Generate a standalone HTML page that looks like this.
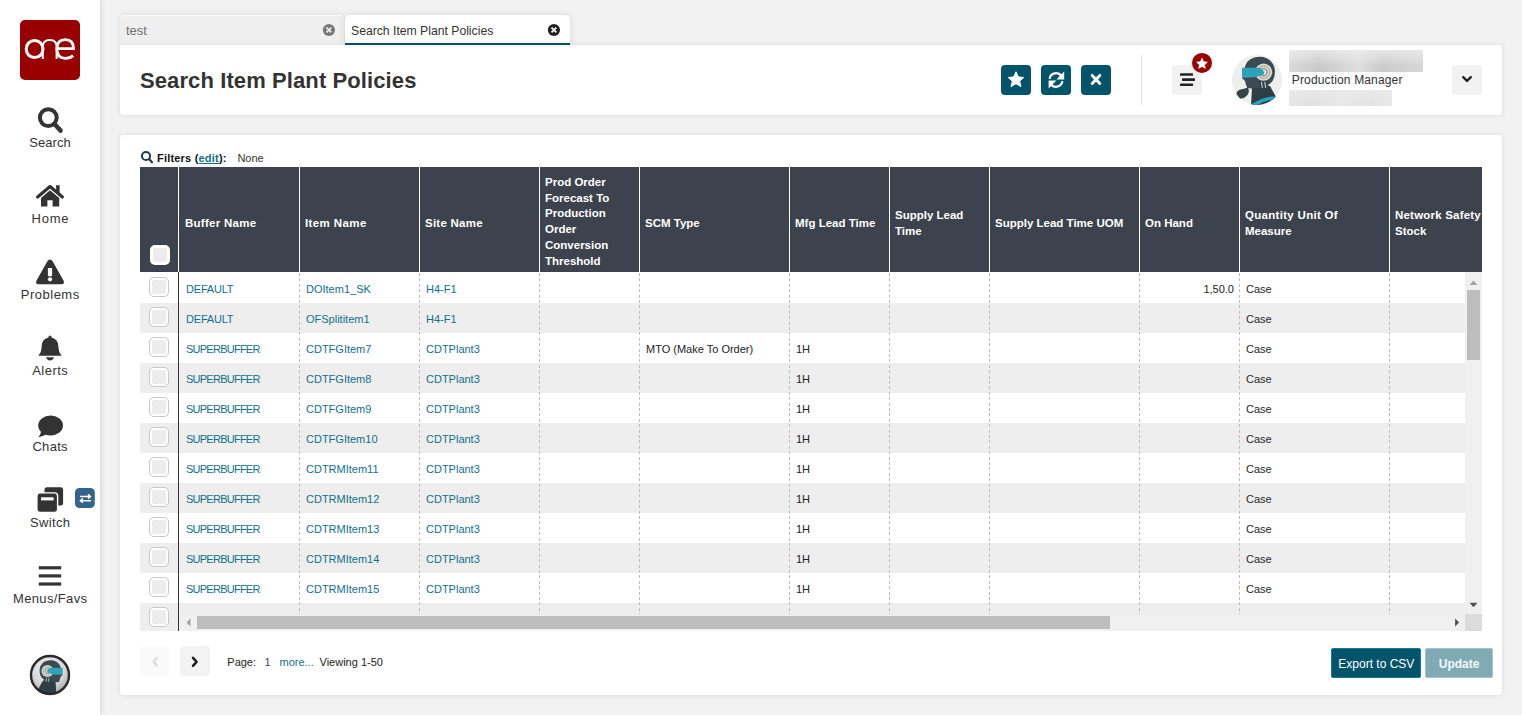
<!DOCTYPE html>
<html><head><meta charset="utf-8"><title>Search Item Plant Policies</title>
<style>
*{box-sizing:border-box;margin:0;padding:0}
html,body{width:1522px;height:715px;overflow:hidden;background:#f2f2f2;font-family:"Liberation Sans",sans-serif;}
.a{position:absolute}
.t{position:absolute;white-space:nowrap;line-height:20px;height:20px}
svg{position:absolute;overflow:visible}
</style></head><body>

<div class="a" style="left:0;top:0;width:100px;height:715px;background:#fff;box-shadow:1px 0 5px rgba(40,15,15,0.13)"></div>
<div class="a" style="left:20px;top:20px;width:60px;height:60px;background:#990000;border-radius:5px"></div>
<svg class="a" style="left:0;top:0" width="100" height="100" viewBox="0 0 100 100">
<g fill="none" stroke="#fff">
<ellipse cx="34.6" cy="49" rx="8.4" ry="8.6" stroke-width="3"/>
<path d="M42.8,59 V46.5 Q42.8,39.9 49.8,39.9 Q56.6,39.9 56.6,46.5 V59" stroke-width="2"/>
<path d="M57,48.6 H73.5 Q73.5,39.7 65.2,39.7 Q56.9,39.7 56.9,49 Q56.9,58.3 65.4,58.3 Q70.2,58.3 73.2,55.6" stroke-width="2.8"/>
</g></svg>
<svg class="a" style="left:0;top:0" width="100" height="715">
<circle cx="48.3" cy="117.6" r="8.4" fill="none" stroke="#333" stroke-width="4"/>
<path d="M54.5,124 L60.5,130.5" stroke="#333" stroke-width="4.6" stroke-linecap="round"/>
<!-- home -->
<path d="M37.6,197 L50,186.6 L62.4,197" fill="none" stroke="#333" stroke-width="3.2" stroke-linecap="round" stroke-linejoin="round"/>
<rect x="56.1" y="185.2" width="3.5" height="8" fill="#333"/>
<path d="M41,198 L50,190.3 L59.2,198 V206.6 H52.6 V200.2 H47.4 V206.6 H41 Z" fill="#333"/>
<!-- warning -->
<path d="M50,259.4 Q51.6,259.4 52.6,261.2 L63.6,280.8 Q64.9,284.2 61.6,284.2 H38.4 Q35.1,284.2 36.4,280.8 L47.4,261.2 Q48.4,259.4 50,259.4 Z" fill="#333"/>
<rect x="47.9" y="268" width="4.2" height="8.2" rx="0.6" fill="#fff"/>
<circle cx="50" cy="279.3" r="2.1" fill="#fff"/>
<!-- bell -->
<path d="M50,335.6 Q51.5,335.6 51.6,337.5 Q58.2,339 58.4,346.5 Q58.6,352.5 61.3,355 V355.8 H38.7 V355 Q41.4,352.5 41.6,346.5 Q41.8,339 48.4,337.5 Q48.5,335.6 50,335.6 Z" fill="#333"/>
<path d="M46,357.3 H54 Q53.2,360.4 50,360.4 Q46.8,360.4 46,357.3 Z" fill="#333"/>
<!-- chat -->
<ellipse cx="50.6" cy="425.5" rx="12.4" ry="10" fill="#333"/>
<path d="M40.8,430.5 Q41.5,433.5 38.2,437.3 Q43.5,436.5 46.5,434.3 Z" fill="#333"/>
<!-- switch -->
<rect x="44.5" y="487.3" width="18.6" height="18.2" rx="2.5" fill="#333"/>
<rect x="36.9" y="492.9" width="20.7" height="19.6" rx="3" fill="#333" stroke="#fff" stroke-width="1.4"/>
<rect x="41" y="497.3" width="12.6" height="3.1" fill="#fff"/>
<rect x="75" y="488" width="19.8" height="20" rx="4.5" fill="#33628b"/>
<path d="M80,496.5 H90.2 M88,494.4 L90.4,496.5 L88,498.6 M91,500.7 H80.6 M82.8,498.6 L80.4,500.7 L82.8,502.8" fill="none" stroke="#fff" stroke-width="1.5"/>
<!-- menus -->
<rect x="38.8" y="566.2" width="22.4" height="3.2" fill="#333"/>
<rect x="38.8" y="574.3" width="22.4" height="3.2" fill="#333"/>
<rect x="38.8" y="582.4" width="22.4" height="3.2" fill="#333"/>
</svg>
<div class="t" style="left:-49.95px;width:200px;text-align:center;top:132.50px;font-size:13px;font-weight:400;color:#333;letter-spacing:0.1px;">Search</div>
<div class="t" style="left:-49.65px;width:200px;text-align:center;top:208.50px;font-size:13px;font-weight:400;color:#333;letter-spacing:0.7px;">Home</div>
<div class="t" style="left:-49.75px;width:200px;text-align:center;top:284.50px;font-size:13px;font-weight:400;color:#333;letter-spacing:0.5px;">Problems</div>
<div class="t" style="left:-49.75px;width:200px;text-align:center;top:360.50px;font-size:13px;font-weight:400;color:#333;letter-spacing:0.5px;">Alerts</div>
<div class="t" style="left:-49.85px;width:200px;text-align:center;top:436.50px;font-size:13px;font-weight:400;color:#333;letter-spacing:0.3px;">Chats</div>
<div class="t" style="left:-49.825px;width:200px;text-align:center;top:512.50px;font-size:13px;font-weight:400;color:#333;letter-spacing:0.35px;">Switch</div>
<div class="t" style="left:-49.825px;width:200px;text-align:center;top:588.50px;font-size:13px;font-weight:400;color:#333;letter-spacing:0.35px;">Menus/Favs</div>
<svg class="a" style="left:0;top:0" width="1522" height="715">
<defs><clipPath id="cp1"><circle cx="50" cy="675" r="20"/></clipPath>
<radialGradient id="rg1" cx="0.45" cy="0.35" r="0.7"><stop offset="0" stop-color="#f4f4f4"/><stop offset="0.6" stop-color="#d6d6d6"/><stop offset="1" stop-color="#9a9a9a"/></radialGradient></defs>
<circle cx="50" cy="675" r="20" fill="url(#rg1)"/>
<g clip-path="url(#cp1)"><g transform="translate(52.1,676.4) scale(-0.7,0.7)">
<path d="M-6,26 L-5,8 Q4,6 13,6 L18.5,16 L20,26 Z" fill="#2f3d44"/>

<path d="M-12.8,-8 Q-13,-20 -2,-22.8 Q12,-25 17,-14 Q19.5,-6 15.5,1 Q13,4 11,5 L11,8 L2,8 Q-3,9 -6,8.5 L-9.8,8 Q-11.5,4 -12,1 L-15,-2 Q-13,-4 -12.8,-8 Z" fill="#3c4b52"/>
<path d="M2,1.5 L11,1.5 L11.5,8 L1.5,8.5 Z" fill="#34434a"/>
<path d="M4.5,2 L5.3,7.8 M7.8,2 L8.6,7.8" stroke="#c9d3d6" stroke-width="1.1"/>
<circle cx="6.6" cy="-7.8" r="8.6" fill="#d6dbdb"/>
<circle cx="6.6" cy="-7.8" r="6.3" fill="none" stroke="#b59f62" stroke-width="1"/>
<circle cx="6.6" cy="-7.8" r="3.6" fill="none" stroke="#8c9599" stroke-width="1.4"/>
<path d="M-15,-12.3 L3,-12.3 Q8,-9 7,-6 Q3,-2.5 -15,-2.2 Z" fill="#2ea2b9"/>

</g></g><circle cx="50" cy="675" r="19" fill="none" stroke="#2a2a2a" stroke-width="2.4"/></svg>
<div class="a" style="left:120px;top:15px;width:224px;height:30px;border-radius:5px 5px 0 0;box-shadow:0 0 6px rgba(40,15,15,0.10)"></div>
<div class="a" style="left:345px;top:15px;width:225px;height:30px;border-radius:5px 5px 0 0;box-shadow:0 0 7px rgba(40,15,15,0.12)"></div>
<div class="a" style="left:120px;top:45px;width:1382px;height:70px;background:#fff;border-radius:0 4px 4px 4px;box-shadow:0 0 6px rgba(40,15,15,0.10)"></div>
<div class="a" style="left:120px;top:15px;width:224px;height:30px;background:#efefef;border-radius:5px 5px 0 0;box-shadow:inset 0 1px 0 #fafafa, inset -3px -2px 4px rgba(0,0,0,0.04)"></div>
<div class="a" style="left:345px;top:15px;width:225px;height:30px;background:#fff;border-radius:5px 5px 0 0;border-bottom:2px solid #02546b"></div>
<div class="t" style="left:126px;top:20.50px;font-size:13px;font-weight:400;color:#707070;letter-spacing:0px;">test</div>
<div class="t" style="left:351px;top:20.77px;font-size:12.2px;font-weight:400;color:#333;letter-spacing:0px;">Search Item Plant Policies</div>
<svg class="a" style="left:0;top:0" width="600" height="60">
<circle cx="328.9" cy="30" r="6.1" fill="#777"/>
<path d="M326.5,27.6 L331.3,32.4 M331.3,27.6 L326.5,32.4" stroke="#efefef" stroke-width="1.7"/>
<circle cx="553.9" cy="30" r="6.1" fill="#222"/>
<path d="M551.5,27.6 L556.3,32.4 M556.3,27.6 L551.5,32.4" stroke="#fff" stroke-width="1.7"/>
</svg>
<div class="t" style="left:140px;top:70.98px;font-size:22px;font-weight:700;color:#333;letter-spacing:0.1px;">Search Item Plant Policies</div>
<div class="a" style="left:1001px;top:65px;width:30px;height:30px;background:#02546b;border-radius:4px"></div>
<div class="a" style="left:1041px;top:65px;width:30px;height:30px;background:#02546b;border-radius:4px"></div>
<div class="a" style="left:1081px;top:65px;width:30px;height:30px;background:#02546b;border-radius:4px"></div>
<svg class="a" style="left:0;top:0" width="1522" height="130">
<path d="M1016,71.8 L1018.3,76.9 L1023.8,77.5 L1019.7,81.1 L1020.9,86.5 L1016,83.7 L1011.1,86.5 L1012.3,81.1 L1008.2,77.5 L1013.7,76.9 Z" fill="#fff" stroke="#fff" stroke-width="1" stroke-linejoin="round"/>
<path d="M1049.6,78.8 A6.5,6.5 0 0 1 1061.6,76.4" fill="none" stroke="#fff" stroke-width="2.2"/>
<path d="M1064.2,71.6 V79.4 H1056.4 Z" fill="#fff"/>
<path d="M1062.4,81.2 A6.5,6.5 0 0 1 1050.4,83.6" fill="none" stroke="#fff" stroke-width="2.2"/>
<path d="M1048.6,88.4 V80.6 H1056.4 Z" fill="#fff"/>
<path d="M1092.2,75.4 L1099.8,83.4 M1099.8,75.4 L1092.2,83.4" stroke="#fff" stroke-width="2.9" stroke-linecap="round"/>
<rect x="1141" y="55" width="1" height="50" fill="#e3e3e3"/>
</svg>
<div class="a" style="left:1172px;top:65px;width:30px;height:30px;background:#f2f2f2;border-radius:4px"></div>
<svg class="a" style="left:0;top:0" width="1522" height="130">
<rect x="1180" y="73.2" width="13" height="2.6" rx="0.6" fill="#222"/>
<rect x="1182" y="78.3" width="13" height="2.6" rx="0.6" fill="#222"/>
<rect x="1180" y="83.4" width="13" height="2.6" rx="0.6" fill="#222"/>
<circle cx="1202" cy="62.9" r="10" fill="#990000"/>
<g transform="translate(0,1.2)"><path d="M1202,57.2 L1203.6,60.6 L1207.3,61 L1204.5,63.5 L1205.3,67.1 L1202,65.2 L1198.7,67.1 L1199.5,63.5 L1196.7,61 L1200.4,60.6 Z" fill="#fff" stroke="#fff" stroke-width="0.8" stroke-linejoin="round"/></g>
</svg>
<svg class="a" style="left:0;top:0" width="1522" height="715">
<defs><clipPath id="cp2"><circle cx="1257" cy="80" r="25"/></clipPath>
<radialGradient id="rg2" cx="0.45" cy="0.35" r="0.7"><stop offset="0" stop-color="#f4f4f4"/><stop offset="0.6" stop-color="#d6d6d6"/><stop offset="1" stop-color="#9a9a9a"/></radialGradient></defs>
<circle cx="1257" cy="80" r="25" fill="#efefef"/>
<g clip-path="url(#cp2)"><g transform="translate(1257,80) scale(1.0,1.0)">
<path d="M-6,26 L-5,8 Q4,6 13,6 L18.5,16 L20,26 Z" fill="#2f3d44"/>
<path d="M-6,24.5 Q4,17.5 17,16.2 L18.5,19.3 Q6,20.3 -3,27 Z" fill="#23a3c3"/>
<path d="M-12.8,-8 Q-13,-20 -2,-22.8 Q12,-25 17,-14 Q19.5,-6 15.5,1 Q13,4 11,5 L11,8 L2,8 Q-3,9 -6,8.5 L-9.8,8 Q-11.5,4 -12,1 L-15,-2 Q-13,-4 -12.8,-8 Z" fill="#3c4b52"/>
<path d="M2,1.5 L11,1.5 L11.5,8 L1.5,8.5 Z" fill="#34434a"/>
<path d="M4.5,2 L5.3,7.8 M7.8,2 L8.6,7.8" stroke="#c9d3d6" stroke-width="1.1"/>
<circle cx="6.6" cy="-7.8" r="8.6" fill="#d6dbdb"/>
<circle cx="6.6" cy="-7.8" r="6.3" fill="none" stroke="#b59f62" stroke-width="1"/>
<circle cx="6.6" cy="-7.8" r="3.6" fill="none" stroke="#8c9599" stroke-width="1.4"/>
<path d="M-15,-12.3 L3,-12.3 Q8,-9 7,-6 Q3,-2.5 -15,-2.2 Z" fill="#2ea2b9"/>
<path d="M-9,7.5 Q-7,12 -10,15.5 Q-13,19 -17,18.7 Q-21,17.5 -20.5,13 Q-19.5,9.5 -14,9 Z" fill="#33434a"/>
</g></g></svg>
<div class="a" style="left:1289px;top:50px;width:134px;height:22px;background:linear-gradient(180deg,rgba(240,240,240,0.75),rgba(240,240,240,0.1) 75%),linear-gradient(90deg,#d8d8d8,#c4c4c4 22%,#d6d6d6 45%,#dcdcdc 52%,#c6c6c6 70%,#d0d0d0 90%,#d4d4d4)"></div>
<div class="t" style="left:1291.8px;top:69.84px;font-size:12px;font-weight:400;color:#333;letter-spacing:0.15px;">Production Manager</div>
<div class="a" style="left:1289px;top:90px;width:103px;height:16px;background:linear-gradient(180deg,rgba(236,236,236,0.6),rgba(236,236,236,0) 80%),linear-gradient(90deg,#e6e6e6,#e1e1e1 20%,#e8e8e8 50%,#e3e3e3 80%,#e9e9e9)"></div>
<div class="a" style="left:1452px;top:65px;width:30px;height:30px;background:#f2f2f2;border-radius:4px"></div>
<svg class="a" style="left:0;top:0" width="1522" height="130"><path d="M1463.2,77.2 L1467,80.9 L1470.8,77.2" fill="none" stroke="#222" stroke-width="2.4" stroke-linecap="round" stroke-linejoin="round"/></svg>
<div class="a" style="left:120px;top:135px;width:1382px;height:560px;background:#fff;border-radius:4px;box-shadow:0 0 6px rgba(40,15,15,0.10)"></div>
<svg class="a" style="left:0;top:0" width="300" height="200">
<circle cx="146" cy="156" r="4.1" fill="none" stroke="#233a4a" stroke-width="2"/>
<path d="M149,159 L152,162.2" stroke="#233a4a" stroke-width="2.3" stroke-linecap="round"/>
</svg>
<div class="t" style="left:157px;top:148.19px;font-size:11px;font-weight:700;color:#111;letter-spacing:0.2px">Filters (<span style="color:#12708c;text-decoration:underline">edit</span>):</div>
<div class="t" style="left:237.4px;top:148.19px;font-size:11px;font-weight:400;color:#333;letter-spacing:0px;">None</div>
<div class="a" style="left:140px;top:167px;width:1342px;height:464px;overflow:hidden">
<div class="a" style="left:0;top:0;width:1342px;height:105px;background:#3d434c"></div>
<div class="t" style="left:45px;top:46.12px;font-size:11.5px;font-weight:700;color:#fff;letter-spacing:0.27px">Buffer Name</div>
<div class="a" style="left:159px;top:0;width:1px;height:105px;background:#fff"></div>
<div class="t" style="left:165px;top:46.12px;font-size:11.5px;font-weight:700;color:#fff;letter-spacing:0.4px">Item Name</div>
<div class="a" style="left:279px;top:0;width:1px;height:105px;background:#fff"></div>
<div class="t" style="left:285px;top:46.12px;font-size:11.5px;font-weight:700;color:#fff;letter-spacing:0.25px">Site Name</div>
<div class="a" style="left:399px;top:0;width:1px;height:105px;background:#fff"></div>
<div class="t" style="left:405px;top:4.72px;font-size:11.5px;font-weight:700;color:#fff;letter-spacing:0px">Prod Order</div>
<div class="t" style="left:405px;top:20.54px;font-size:11.5px;font-weight:700;color:#fff;letter-spacing:0px">Forecast To</div>
<div class="t" style="left:405px;top:36.36px;font-size:11.5px;font-weight:700;color:#fff;letter-spacing:0px">Production</div>
<div class="t" style="left:405px;top:52.18px;font-size:11.5px;font-weight:700;color:#fff;letter-spacing:0px">Order</div>
<div class="t" style="left:405px;top:68.00px;font-size:11.5px;font-weight:700;color:#fff;letter-spacing:0px">Conversion</div>
<div class="t" style="left:405px;top:83.82px;font-size:11.5px;font-weight:700;color:#fff;letter-spacing:0px">Threshold</div>
<div class="a" style="left:499px;top:0;width:1px;height:105px;background:#fff"></div>
<div class="t" style="left:505px;top:46.12px;font-size:11.5px;font-weight:700;color:#fff;letter-spacing:0px">SCM Type</div>
<div class="a" style="left:649px;top:0;width:1px;height:105px;background:#fff"></div>
<div class="t" style="left:655px;top:46.12px;font-size:11.5px;font-weight:700;color:#fff;letter-spacing:0px">Mfg Lead Time</div>
<div class="a" style="left:749px;top:0;width:1px;height:105px;background:#fff"></div>
<div class="t" style="left:755px;top:38.22px;font-size:11.5px;font-weight:700;color:#fff;letter-spacing:0px">Supply Lead</div>
<div class="t" style="left:755px;top:54.02px;font-size:11.5px;font-weight:700;color:#fff;letter-spacing:0px">Time</div>
<div class="a" style="left:849px;top:0;width:1px;height:105px;background:#fff"></div>
<div class="t" style="left:855px;top:46.12px;font-size:11.5px;font-weight:700;color:#fff;letter-spacing:0px">Supply Lead Time UOM</div>
<div class="a" style="left:999px;top:0;width:1px;height:105px;background:#fff"></div>
<div class="t" style="left:1005px;top:46.12px;font-size:11.5px;font-weight:700;color:#fff;letter-spacing:0px">On Hand</div>
<div class="a" style="left:1099px;top:0;width:1px;height:105px;background:#fff"></div>
<div class="t" style="left:1105px;top:38.22px;font-size:11.5px;font-weight:700;color:#fff;letter-spacing:0.3px">Quantity Unit Of</div>
<div class="t" style="left:1105px;top:54.02px;font-size:11.5px;font-weight:700;color:#fff;letter-spacing:0px">Measure</div>
<div class="a" style="left:1249px;top:0;width:1px;height:105px;background:#fff"></div>
<div class="t" style="left:1255px;top:38.22px;font-size:11.5px;font-weight:700;color:#fff;letter-spacing:0.2px">Network Safety</div>
<div class="t" style="left:1255px;top:54.02px;font-size:11.5px;font-weight:700;color:#fff;letter-spacing:0px">Stock</div>
<div class="a" style="left:10px;top:78px;width:20px;height:20px;border:3px solid #fff;background:#ececec;border-radius:5px"></div>
<div class="a" style="left:0;top:105px;width:1325px;height:31px;background:#fff"></div>
<div class="a" style="left:9px;top:110px;width:20px;height:20px;border:1px solid #c8c8c8;background:#ececec;border-radius:5px;box-shadow:inset 0 0 0 2px #fff"></div>
<div class="t" style="left:46px;top:111.89px;font-size:11px;color:#12708c;letter-spacing:-0.2px">DEFAULT</div>
<div class="t" style="left:166px;top:111.89px;font-size:11px;color:#12708c;letter-spacing:0px">DOItem1_SK</div>
<div class="t" style="left:286px;top:111.89px;font-size:11px;color:#12708c;letter-spacing:0px">H4-F1</div>
<div class="t" style="left:999px;width:95px;text-align:right;top:111.89px;font-size:11px;color:#222">1,50.0</div>
<div class="t" style="left:1106px;top:111.89px;font-size:11px;color:#2a2a2a;letter-spacing:0px">Case</div>
<div class="a" style="left:0;top:136px;width:1325px;height:30px;background:#eeeeee"></div>
<div class="a" style="left:9px;top:140px;width:20px;height:20px;border:1px solid #c8c8c8;background:#ececec;border-radius:5px;box-shadow:inset 0 0 0 2px #fff"></div>
<div class="t" style="left:46px;top:141.89px;font-size:11px;color:#12708c;letter-spacing:-0.2px">DEFAULT</div>
<div class="t" style="left:166px;top:141.89px;font-size:11px;color:#12708c;letter-spacing:0px">OFSplititem1</div>
<div class="t" style="left:286px;top:141.89px;font-size:11px;color:#12708c;letter-spacing:0px">H4-F1</div>
<div class="t" style="left:1106px;top:141.89px;font-size:11px;color:#2a2a2a;letter-spacing:0px">Case</div>
<div class="a" style="left:0;top:166px;width:1325px;height:30px;background:#fff"></div>
<div class="a" style="left:9px;top:170px;width:20px;height:20px;border:1px solid #c8c8c8;background:#ececec;border-radius:5px;box-shadow:inset 0 0 0 2px #fff"></div>
<div class="t" style="left:46px;top:171.89px;font-size:11px;color:#12708c;letter-spacing:-0.75px">SUPERBUFFER</div>
<div class="t" style="left:166px;top:171.89px;font-size:11px;color:#12708c;letter-spacing:0px">CDTFGItem7</div>
<div class="t" style="left:286px;top:171.89px;font-size:11px;color:#12708c;letter-spacing:0px">CDTPlant3</div>
<div class="t" style="left:506px;top:171.89px;font-size:11px;color:#222;letter-spacing:0px">MTO (Make To Order)</div>
<div class="t" style="left:656px;top:171.89px;font-size:11px;color:#222;letter-spacing:0px">1H</div>
<div class="t" style="left:1106px;top:171.89px;font-size:11px;color:#2a2a2a;letter-spacing:0px">Case</div>
<div class="a" style="left:0;top:196px;width:1325px;height:30px;background:#eeeeee"></div>
<div class="a" style="left:9px;top:200px;width:20px;height:20px;border:1px solid #c8c8c8;background:#ececec;border-radius:5px;box-shadow:inset 0 0 0 2px #fff"></div>
<div class="t" style="left:46px;top:201.89px;font-size:11px;color:#12708c;letter-spacing:-0.75px">SUPERBUFFER</div>
<div class="t" style="left:166px;top:201.89px;font-size:11px;color:#12708c;letter-spacing:0px">CDTFGItem8</div>
<div class="t" style="left:286px;top:201.89px;font-size:11px;color:#12708c;letter-spacing:0px">CDTPlant3</div>
<div class="t" style="left:656px;top:201.89px;font-size:11px;color:#222;letter-spacing:0px">1H</div>
<div class="t" style="left:1106px;top:201.89px;font-size:11px;color:#2a2a2a;letter-spacing:0px">Case</div>
<div class="a" style="left:0;top:226px;width:1325px;height:30px;background:#fff"></div>
<div class="a" style="left:9px;top:230px;width:20px;height:20px;border:1px solid #c8c8c8;background:#ececec;border-radius:5px;box-shadow:inset 0 0 0 2px #fff"></div>
<div class="t" style="left:46px;top:231.89px;font-size:11px;color:#12708c;letter-spacing:-0.75px">SUPERBUFFER</div>
<div class="t" style="left:166px;top:231.89px;font-size:11px;color:#12708c;letter-spacing:0px">CDTFGItem9</div>
<div class="t" style="left:286px;top:231.89px;font-size:11px;color:#12708c;letter-spacing:0px">CDTPlant3</div>
<div class="t" style="left:656px;top:231.89px;font-size:11px;color:#222;letter-spacing:0px">1H</div>
<div class="t" style="left:1106px;top:231.89px;font-size:11px;color:#2a2a2a;letter-spacing:0px">Case</div>
<div class="a" style="left:0;top:256px;width:1325px;height:30px;background:#eeeeee"></div>
<div class="a" style="left:9px;top:260px;width:20px;height:20px;border:1px solid #c8c8c8;background:#ececec;border-radius:5px;box-shadow:inset 0 0 0 2px #fff"></div>
<div class="t" style="left:46px;top:261.89px;font-size:11px;color:#12708c;letter-spacing:-0.75px">SUPERBUFFER</div>
<div class="t" style="left:166px;top:261.89px;font-size:11px;color:#12708c;letter-spacing:0px">CDTFGItem10</div>
<div class="t" style="left:286px;top:261.89px;font-size:11px;color:#12708c;letter-spacing:0px">CDTPlant3</div>
<div class="t" style="left:656px;top:261.89px;font-size:11px;color:#222;letter-spacing:0px">1H</div>
<div class="t" style="left:1106px;top:261.89px;font-size:11px;color:#2a2a2a;letter-spacing:0px">Case</div>
<div class="a" style="left:0;top:286px;width:1325px;height:30px;background:#fff"></div>
<div class="a" style="left:9px;top:290px;width:20px;height:20px;border:1px solid #c8c8c8;background:#ececec;border-radius:5px;box-shadow:inset 0 0 0 2px #fff"></div>
<div class="t" style="left:46px;top:291.89px;font-size:11px;color:#12708c;letter-spacing:-0.75px">SUPERBUFFER</div>
<div class="t" style="left:166px;top:291.89px;font-size:11px;color:#12708c;letter-spacing:0px">CDTRMItem11</div>
<div class="t" style="left:286px;top:291.89px;font-size:11px;color:#12708c;letter-spacing:0px">CDTPlant3</div>
<div class="t" style="left:656px;top:291.89px;font-size:11px;color:#222;letter-spacing:0px">1H</div>
<div class="t" style="left:1106px;top:291.89px;font-size:11px;color:#2a2a2a;letter-spacing:0px">Case</div>
<div class="a" style="left:0;top:316px;width:1325px;height:30px;background:#eeeeee"></div>
<div class="a" style="left:9px;top:320px;width:20px;height:20px;border:1px solid #c8c8c8;background:#ececec;border-radius:5px;box-shadow:inset 0 0 0 2px #fff"></div>
<div class="t" style="left:46px;top:321.89px;font-size:11px;color:#12708c;letter-spacing:-0.75px">SUPERBUFFER</div>
<div class="t" style="left:166px;top:321.89px;font-size:11px;color:#12708c;letter-spacing:0px">CDTRMItem12</div>
<div class="t" style="left:286px;top:321.89px;font-size:11px;color:#12708c;letter-spacing:0px">CDTPlant3</div>
<div class="t" style="left:656px;top:321.89px;font-size:11px;color:#222;letter-spacing:0px">1H</div>
<div class="t" style="left:1106px;top:321.89px;font-size:11px;color:#2a2a2a;letter-spacing:0px">Case</div>
<div class="a" style="left:0;top:346px;width:1325px;height:30px;background:#fff"></div>
<div class="a" style="left:9px;top:350px;width:20px;height:20px;border:1px solid #c8c8c8;background:#ececec;border-radius:5px;box-shadow:inset 0 0 0 2px #fff"></div>
<div class="t" style="left:46px;top:351.89px;font-size:11px;color:#12708c;letter-spacing:-0.75px">SUPERBUFFER</div>
<div class="t" style="left:166px;top:351.89px;font-size:11px;color:#12708c;letter-spacing:0px">CDTRMItem13</div>
<div class="t" style="left:286px;top:351.89px;font-size:11px;color:#12708c;letter-spacing:0px">CDTPlant3</div>
<div class="t" style="left:656px;top:351.89px;font-size:11px;color:#222;letter-spacing:0px">1H</div>
<div class="t" style="left:1106px;top:351.89px;font-size:11px;color:#2a2a2a;letter-spacing:0px">Case</div>
<div class="a" style="left:0;top:376px;width:1325px;height:30px;background:#eeeeee"></div>
<div class="a" style="left:9px;top:380px;width:20px;height:20px;border:1px solid #c8c8c8;background:#ececec;border-radius:5px;box-shadow:inset 0 0 0 2px #fff"></div>
<div class="t" style="left:46px;top:381.89px;font-size:11px;color:#12708c;letter-spacing:-0.75px">SUPERBUFFER</div>
<div class="t" style="left:166px;top:381.89px;font-size:11px;color:#12708c;letter-spacing:0px">CDTRMItem14</div>
<div class="t" style="left:286px;top:381.89px;font-size:11px;color:#12708c;letter-spacing:0px">CDTPlant3</div>
<div class="t" style="left:656px;top:381.89px;font-size:11px;color:#222;letter-spacing:0px">1H</div>
<div class="t" style="left:1106px;top:381.89px;font-size:11px;color:#2a2a2a;letter-spacing:0px">Case</div>
<div class="a" style="left:0;top:406px;width:1325px;height:30px;background:#fff"></div>
<div class="a" style="left:9px;top:410px;width:20px;height:20px;border:1px solid #c8c8c8;background:#ececec;border-radius:5px;box-shadow:inset 0 0 0 2px #fff"></div>
<div class="t" style="left:46px;top:411.89px;font-size:11px;color:#12708c;letter-spacing:-0.75px">SUPERBUFFER</div>
<div class="t" style="left:166px;top:411.89px;font-size:11px;color:#12708c;letter-spacing:0px">CDTRMItem15</div>
<div class="t" style="left:286px;top:411.89px;font-size:11px;color:#12708c;letter-spacing:0px">CDTPlant3</div>
<div class="t" style="left:656px;top:411.89px;font-size:11px;color:#222;letter-spacing:0px">1H</div>
<div class="t" style="left:1106px;top:411.89px;font-size:11px;color:#2a2a2a;letter-spacing:0px">Case</div>
<div class="a" style="left:0;top:436px;width:1325px;height:30px;background:#eeeeee"></div>
<div class="a" style="left:9px;top:440px;width:20px;height:20px;border:1px solid #c8c8c8;background:#ececec;border-radius:5px;box-shadow:inset 0 0 0 2px #fff"></div>
<div class="a" style="left:159px;top:106px;width:1px;height:341px;background:repeating-linear-gradient(180deg,#bdbdbd 0 3px,transparent 3px 5.4px)"></div>
<div class="a" style="left:279px;top:106px;width:1px;height:341px;background:repeating-linear-gradient(180deg,#bdbdbd 0 3px,transparent 3px 5.4px)"></div>
<div class="a" style="left:399px;top:106px;width:1px;height:341px;background:repeating-linear-gradient(180deg,#bdbdbd 0 3px,transparent 3px 5.4px)"></div>
<div class="a" style="left:499px;top:106px;width:1px;height:341px;background:repeating-linear-gradient(180deg,#bdbdbd 0 3px,transparent 3px 5.4px)"></div>
<div class="a" style="left:649px;top:106px;width:1px;height:341px;background:repeating-linear-gradient(180deg,#bdbdbd 0 3px,transparent 3px 5.4px)"></div>
<div class="a" style="left:749px;top:106px;width:1px;height:341px;background:repeating-linear-gradient(180deg,#bdbdbd 0 3px,transparent 3px 5.4px)"></div>
<div class="a" style="left:849px;top:106px;width:1px;height:341px;background:repeating-linear-gradient(180deg,#bdbdbd 0 3px,transparent 3px 5.4px)"></div>
<div class="a" style="left:999px;top:106px;width:1px;height:341px;background:repeating-linear-gradient(180deg,#bdbdbd 0 3px,transparent 3px 5.4px)"></div>
<div class="a" style="left:1099px;top:106px;width:1px;height:341px;background:repeating-linear-gradient(180deg,#bdbdbd 0 3px,transparent 3px 5.4px)"></div>
<div class="a" style="left:1249px;top:106px;width:1px;height:341px;background:repeating-linear-gradient(180deg,#bdbdbd 0 3px,transparent 3px 5.4px)"></div>
<div class="a" style="left:38px;top:105px;width:1px;height:359px;background:#333"></div>
<div class="a" style="left:38px;top:0;width:1px;height:105px;background:#fff"></div>
<div class="a" style="left:1325px;top:105px;width:17px;height:342px;background:#f0f0f0"></div>
<div class="a" style="left:1327px;top:123px;width:13px;height:70px;background:#bdbdbd"></div>
<svg class="a" style="left:0;top:0" width="1342" height="464"><path d="M1329.5,118 L1333.5,113.5 L1337.5,118 Z" fill="#a3a3a3"/><path d="M1329.5,435.8 L1333.5,440.3 L1337.5,435.8 Z" fill="#505050"/></svg>
<div class="a" style="left:39px;top:447px;width:1286px;height:17px;background:#f0f0f0"></div>
<div class="a" style="left:57px;top:449px;width:913px;height:13px;background:#bdbdbd"></div>
<div class="a" style="left:1325px;top:447px;width:17px;height:17px;background:#dcdcdc"></div>
<svg class="a" style="left:0;top:0" width="1342" height="464"><path d="M50.5,451.5 L46.5,455.5 L50.5,459.5 Z" fill="#a3a3a3"/><path d="M1315.1,451.5 L1319.1,455.5 L1315.1,459.5 Z" fill="#505050"/></svg>
</div>
<div class="a" style="left:140px;top:646px;width:30px;height:30px;background:#fafafa;border-radius:4px"></div>
<div class="a" style="left:180px;top:646px;width:30px;height:30px;background:#f3f3f3;border-radius:4px"></div>
<svg class="a" style="left:0;top:0" width="400" height="715">
<path d="M157,657.8 L153.6,661.8 L157,665.8" fill="none" stroke="#dedede" stroke-width="2.3" stroke-linecap="round" stroke-linejoin="round"/>
<path d="M193,657.8 L196.6,661.8 L193,665.8" fill="none" stroke="#222" stroke-width="2.5" stroke-linecap="round" stroke-linejoin="round"/>
</svg>
<div class="t" style="left:227.3px;top:651.69px;font-size:11px;font-weight:400;color:#222;letter-spacing:0px;">Page:</div>
<div class="t" style="left:264.5px;top:651.69px;font-size:11px;font-weight:400;color:#445;letter-spacing:0px;">1</div>
<div class="t" style="left:279.5px;top:651.69px;font-size:11px;font-weight:400;color:#12708c;letter-spacing:0px;">more...</div>
<div class="t" style="left:319.5px;top:651.69px;font-size:11px;font-weight:400;color:#222;letter-spacing:0px;">Viewing 1-50</div>
<div class="a" style="left:1331px;top:648px;width:90px;height:30px;background:#02546b;border:1px solid #157a93;border-radius:2px"></div>
<div class="t" style="left:1338.3px;top:654.04px;font-size:12px;font-weight:400;color:#fff;letter-spacing:0px;">Export to CSV</div>
<div class="a" style="left:1425px;top:648px;width:68px;height:30px;background:#80abb5;border:1px solid #9cc7d0;border-radius:2px"></div>
<div class="t" style="left:1438.8px;top:654.04px;font-size:12px;font-weight:700;color:#f4f8f9;letter-spacing:0px;">Update</div>
</body></html>
